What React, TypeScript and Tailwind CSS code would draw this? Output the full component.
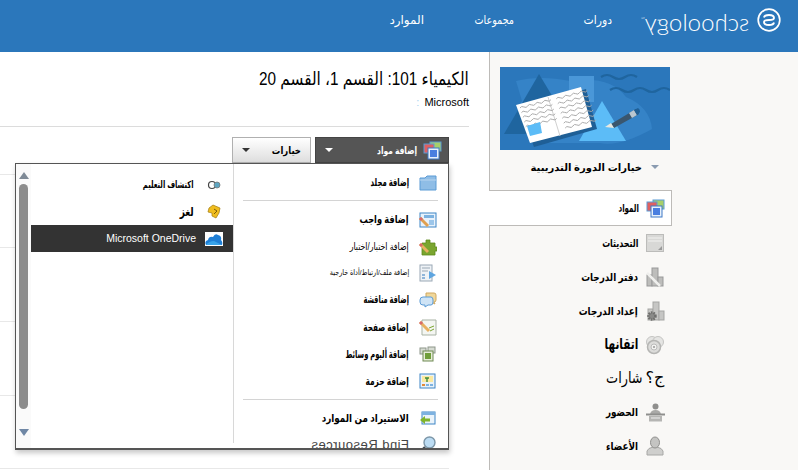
import React from "react";

const Folder = () => (
  <svg width="18" height="16" viewBox="0 0 18 16"><path d="M1 3 L1 15 L17 15 L17 1 L8 1 L6 3 Z" fill="#8fbde6" stroke="#5b9bd5" /><path d="M1 5 H17" stroke="#b9d6ef" /></svg>
);
const Assign = () => (
  <svg width="18" height="16" viewBox="0 0 18 16"><rect x="1" y="1" width="16" height="14" fill="#e8f2fb" stroke="#3f86c6" /><rect x="5" y="3" width="10" height="3" fill="#7db2e0" /><rect x="10" y="8" width="5" height="5" fill="#9cc6ea" /><path d="M1 6 L9 14" stroke="#e0a050" strokeWidth="3" /><path d="M1 6 L3 8" stroke="#d86a6a" strokeWidth="3" /></svg>
);
const Quiz = () => (
  <svg width="18" height="18" viewBox="0 0 18 18"><path d="M3 5 H7 V2 H11 V5 H16 V9 H18 V13 H16 V17 H3 Z" fill="#7aa52f" stroke="#5d8a1c" strokeWidth=".8" /><path d="M1 6 L9 14" stroke="#e8b060" strokeWidth="3" /><path d="M1 6 L3 8" stroke="#d86a6a" strokeWidth="3" /></svg>
);
const FileLink = () => (
  <svg width="18" height="18" viewBox="0 0 18 18"><rect x="1" y="1" width="12" height="16" fill="#eef2f6" stroke="#9aa8b5" /><path d="M3 4 H11 M3 7 H9" stroke="#9aa8b5" /><rect x="3" y="10" width="3" height="2" fill="#8fb5da" /><rect x="3" y="13" width="3" height="2" fill="#8fb5da" /><path d="M10 7 L17 11 L10 15 Z" fill="#5ea5e0" /></svg>
);
const Discuss = () => (
  <svg width="18" height="16" viewBox="0 0 18 16"><path d="M7 1 H15 Q17 1 17 3 V8 Q17 10 15 10 L16 12 L12 10 H7 Z" fill="#f0d79a" stroke="#d0a860" /><path d="M4 5 H12 Q14 5 14 8 V10 Q14 13 12 13 H9 L6 15 V13 H4 Q1 13 1 10 V8 Q1 5 4 5 Z" fill="#cfe4f6" stroke="#5b9bd5" /></svg>
);
const Page = () => (
  <svg width="18" height="17" viewBox="0 0 18 17"><path d="M3 1 H17 V16 H3 Z" fill="#f4f6f2" stroke="#a9b3a5" /><path d="M10 9 L15 7 M11 12 L15 10" stroke="#7aa52f" /><path d="M1 3 L10 12" stroke="#e8b060" strokeWidth="3" /><path d="M1 3 L3 5" stroke="#d86a6a" strokeWidth="3" /></svg>
);
const Album = () => (
  <svg width="17" height="17" viewBox="0 0 17 17"><rect x="9" y="1" width="7" height="6" fill="#d7dcd3" stroke="#8d968a" /><rect x="1" y="2" width="6" height="6" fill="#d7dcd3" stroke="#8d968a" /><rect x="4" y="5" width="10" height="10" fill="#e6ecd8" stroke="#6f8a55" /><rect x="6" y="7" width="6" height="6" fill="#6f9e3a" /></svg>
);
const Pkg = () => (
  <svg width="17" height="16" viewBox="0 0 17 16"><rect x="1" y="1" width="15" height="14" fill="#e9f2f8" stroke="#3f86c6" /><rect x="3" y="3" width="11" height="6" fill="#fbe9a0" /><path d="M8 9 V5 M6 5 H10" stroke="#3f8a3a" strokeWidth="1.4" /><rect x="3" y="11" width="3" height="2" fill="#e08a3a" /><rect x="7" y="11" width="3" height="2" fill="#7db2e0" /><rect x="11" y="11" width="3" height="2" fill="#7db2e0" /></svg>
);
const ImportIc = () => (
  <svg width="16" height="14" viewBox="0 0 16 14"><rect x="2" y="1" width="13" height="12" fill="#eaf3fa" stroke="#3f86c6" /><rect x="2" y="1" width="13" height="3" fill="#7db2e0" /><path d="M0 9 L5 5 V7.500 H10 V10.500 H5 V13 Z" fill="#7fb42c" /></svg>
);
const Magnifier = () => (
  <svg width="17" height="17" viewBox="0 0 17 17"><circle cx="10.500" cy="6.500" r="5.500" fill="#bcdcf3" stroke="#7c96a8" strokeWidth="1.400" /><path d="M6 11 L1 16" stroke="#3d4a55" strokeWidth="2.400" /></svg>
);
const Learn = () => (
  <svg width="14" height="10" viewBox="0 0 14 10"><circle cx="5" cy="5" r="3.500" fill="none" stroke="#444" strokeWidth="1.200" /><circle cx="10" cy="5" r="3" fill="#5ea5c0" stroke="#777" strokeWidth=".8" /></svg>
);
const Puzzle = () => (
  <svg width="14" height="16" viewBox="0 0 14 16"><path d="M6 1 L13 4 L12 9 L9 14 L5 12 L5 9 L1 8 L2 4 Z" fill="#f0bd1e" stroke="#a07a10" strokeWidth=".7" /><path d="M7 5 L10 7 L7 10" stroke="#7a5c08" fill="none" /></svg>
);
const Cloud = () => (
  <svg width="18" height="14" viewBox="0 0 18 14" className="bg-white"><path d="M1 13 Q-1 9 3 8 Q4 4 8 5 Q10 1 13 3 Q17 4 16 8 Q18 10 17 13 Z" fill="#1f7fd6" /><path d="M1 13 Q4 9 9 9 L17 13 Z" fill="#38a3ea" /></svg>
);
const Materials = () => (
  <svg width="19" height="19" viewBox="0 0 19 19"><rect x="7" y="1" width="11" height="9" fill="#a8cf6a" stroke="#5b9bd5" /><rect x="1" y="3" width="10" height="9" fill="#e06060" stroke="#5b9bd5" /><rect x="5" y="7" width="11" height="11" fill="#e8f1fb" stroke="#3f78c6" /><rect x="7" y="9" width="7" height="7" fill="#4a7fe0" /></svg>
);
const Updates = () => (
  <svg width="18" height="18" viewBox="0 0 18 18"><rect x="0.500" y="0.500" width="17" height="17" fill="#d8d8d6" stroke="#bcbcba" /><path d="M2 4 H16 M2 7 H16" stroke="#f2f2f0" /><path d="M12 16 L16 12 V16 Z" fill="#999" /></svg>
);
const Gradebook = () => (
  <svg width="18" height="20" viewBox="0 0 18 20"><rect x="1" y="8" width="5" height="11" fill="#bdbdbb" stroke="#999" /><rect x="6" y="1" width="6" height="18" fill="#bdbdbb" stroke="#999" /><rect x="12" y="10" width="5" height="9" fill="#bdbdbb" stroke="#999" /><path d="M1 6 L14 19" stroke="#efefed" strokeWidth="2.500" /></svg>
);
const GradeSetup = () => (
  <svg width="19" height="21" viewBox="0 0 19 21"><rect x="2" y="8" width="5" height="11" fill="#c6c6c4" stroke="#a5a5a3" /><rect x="7" y="1" width="6" height="18" fill="#c6c6c4" stroke="#a5a5a3" /><rect x="13" y="10" width="5" height="9" fill="#c6c6c4" stroke="#a5a5a3" /><circle cx="6" cy="15" r="3.500" fill="#8a8a88" stroke="#6f6f6d" strokeWidth="2.500" strokeDasharray="1.500 1" /></svg>
);
const Mastery = () => (
  <svg width="20" height="20" viewBox="0 0 20 20"><circle cx="7" cy="7" r="5.500" fill="#e5e5e3" stroke="#c4c4c2" /><circle cx="13" cy="7" r="5.500" fill="#e5e5e3" stroke="#c4c4c2" /><circle cx="9" cy="12" r="6.500" fill="#dcdcda" stroke="#b5b5b3" strokeWidth="1.500" /><circle cx="9" cy="12" r="3" fill="#f2f2f0" stroke="#bbb" /><circle cx="9" cy="12" r="1" fill="#999" /></svg>
);
const Attendance = () => (
  <svg width="19" height="19" viewBox="0 0 19 19"><circle cx="9.500" cy="3.500" r="3" fill="#8f8f8d" /><path d="M4 11 Q5 7 9.500 7 Q14 7 15 11 Z" fill="#a9a9a7" /><rect x="0" y="10.500" width="19" height="2" fill="#8f8f8d" /><rect x="3" y="13" width="13" height="5.500" fill="#b5b5b3" /><path d="M5 15 H14" stroke="#eee" /></svg>
);
const Member = () => (
  <svg width="18" height="20" viewBox="0 0 18 20"><path d="M1 19 V15 Q2 12 7 11 H11 Q16 12 17 15 V19 Z" fill="#cfcfcd" stroke="#a8a8a6" /><ellipse cx="9" cy="6.500" rx="4.500" ry="5.500" fill="#c4c4c2" stroke="#8f8f8d" /></svg>
);

function Illustration() {
  const wave = (x: number, y: number, w: number) => {
    let d = `M${x} ${y}`;
    for (let i = 0; i < w; i += 8) d += ` q2 -2 4 0 t4 0`;
    return d;
  };
  const left = [41, 46, 51, 56, 61];
  const right = [27, 32, 37, 42, 47, 52, 57];
  return (
    <svg width="170" height="83" viewBox="0 0 170 83" className="block">
      <rect width="170" height="83" fill="#2b77bb" />
      <path d="M16 14 Q40 8 70 14 Q110 8 126 30 Q150 40 152 62 Q120 80 100 76 L40 76 Q10 50 22 34 Z" fill="#3583c7" />
      <path d="M39 7 L4 67 L75 67 Z" fill="#1f659f" />
      <rect x="69" y="9" width="25" height="26" fill="#4a97d8" />
      <path d="M102 34 L79 74 L126 74 Z" fill="#5cbcf7" />
      <path d="M101 10 q6 -4 12 0 t12 0 t12 0" stroke="#1f659f" strokeWidth="2.200" fill="none" />
      <path d="M110 23 q6 -4 12 0 t12 0 t12 0 t12 0 t12 0" stroke="#1f659f" strokeWidth="2.200" fill="none" />
      <path d="M20 42 L86 22 L97 62 L34 80 Z" fill="#1f5f96" />
      <path d="M16 38 L81 20 L92 60 L30 76 Z" fill="#ffffff" />
      <path d="M48 30 L60 69" stroke="#d0d0d0" />
      {left.map((y, i) => (
        <path key={i} d={wave(20 + i * 1.500, y - i * 0.200, 26)} stroke="#aaa" strokeWidth=".9" fill="none" transform={`rotate(-15 ${20 + i} ${y})`} />
      ))}
      {right.map((y, i) => (
        <path key={i} d={wave(55 + i * 1.500, y + 5, 26)} stroke="#aaa" strokeWidth=".9" fill="none" transform={`rotate(-15 ${55 + i} ${y})`} />
      ))}
      <path d="M27 59 L40 55 L42 66 L30 69 Z" fill="#5cbcf7" />
      <path d="M111 57 L136 42 L139 47 L114 61 Z" fill="#3a566e" />
      <path d="M129 46 L134 43 L137 48 L132 51 Z" fill="#b9c6d0" />
      <path d="M134 43 L138 41 Q140 42 140 45 L137 48 Z" fill="#1f5f96" />
      <path d="M105 60 L111 56 L114 61 Z" fill="#e8e8e0" />
    </svg>
  );
}

const Tri = ({ c }: { c: string }) => <span className={`inline-block w-0 h-0 border-x-[4px] border-x-transparent border-t-[4px] ${c}`} />;

const squeeze = "inline-block origin-right whitespace-nowrap";

const items: [React.ReactNode, string, string, string][] = [
  [<Assign />, "إضافة واجب", "text-[11px] font-bold h-[27px]", "scale-x-[0.75]"],
  [<Quiz />, "إضافة اختبار/اختبار", "text-[10px] h-[27px]", "scale-x-[0.78]"],
  [<FileLink />, "إضافة ملف/ارتباط/أداة خارجية", "text-[8px] h-[26px]", "scale-x-[0.8]"],
  [<Discuss />, "إضافة مناقشة", "text-[11px] font-bold h-[27px]", "scale-x-[0.6]"],
  [<Page />, "إضافة صفحة", "text-[11px] font-bold h-[28px]", "scale-x-[0.66]"],
  [<Album />, "إضافة ألبوم وسائط", "text-[11px] font-bold h-[26px]", "scale-x-[0.61]"],
  [<Pkg />, "إضافة حزمة", "text-[11px] font-bold h-[28px]", "scale-x-[0.68]"],
];

const nav: [React.ReactNode, string, string, string][] = [
  [<Updates />, "التحديثات", "text-[11px] font-bold h-[34px]", "scale-x-[0.72]"],
  [<Gradebook />, "دفتر الدرجات", "text-[11px] font-bold h-[34px]", "scale-x-[0.8]"],
  [<GradeSetup />, "إعداد الدرجات", "text-[11px] font-bold h-[34px]", "scale-x-[0.8]"],
  [<Mastery />, "اتقانها", "text-[15px] font-bold h-[33px]", "scale-x-[0.7]"],
  [<span className="text-[16px] leading-none">ج؟</span>, "شارات", "text-[16px] h-[34px]", "scale-x-[0.8] -mr-[5px]"],
  [<Attendance />, "الحضور", "text-[11px] font-bold h-[34px]", "scale-x-[0.8]"],
  [<Member />, "الأعضاء", "text-[11px] font-bold h-[34px]", "scale-x-[0.8]"],
];

export default function App() {
  return (
    <div dir="rtl" className="w-[798px] h-[470px] overflow-hidden bg-white text-black font-['Liberation_Sans','DejaVu_Sans',sans-serif]">
      <header className="h-[52px] bg-[#2b77bb] flex items-start pt-[8px] pr-[17px] text-white">
        <div className="flex items-center gap-[8px] w-[138px] h-[24px] shrink-0">
          <svg width="24" height="24" viewBox="0 0 24 24" className="shrink-0">
            <circle cx="12" cy="12" r="10.800" fill="none" stroke="#fff" strokeWidth="1.700" />
            <path d="M7 9.500 Q7.500 7 12 7 Q17 7 17 10 Q17 12 12 12 Q7 12 7 14 Q7 17 12 17 Q16.500 17 17 14.500" fill="none" stroke="#fff" strokeWidth="1.900" />
          </svg>
          <span dir="ltr" className="-scale-x-100 font-['Lato',sans-serif] font-light text-[24px] leading-[24px] whitespace-nowrap">schoology<span className="text-[5px] align-[10px]">™</span></span>
        </div>
        <nav className="flex text-[12px] leading-[24px] mr-[31px]">
          <span className={`w-[29px] ${squeeze} scale-x-[0.9]`}>دورات</span>
          <span className={`w-[41px] mr-[69px] ${squeeze} scale-x-[0.8]`}>مجموعات</span>
          <span className={`w-[30px] mr-[49px] ${squeeze}`}>الموارد</span>
        </nav>
      </header>

      <div className="flex h-[418px]">
        <aside className="w-[309px] shrink-0 bg-[#f9f8f6] border-l border-[#bdbbb8] flex flex-col">
          <div className="w-[170px] mr-[128px] mt-[15px]">
            <Illustration />
          </div>
          <div className="w-[180px] mr-auto h-[40px] flex items-center pb-[6px] pr-[11px] text-[10px] font-bold gap-[9px]">
            <Tri c="border-t-[#8a9bb0]" />
            <span>خيارات الدورة التدريبية</span>
          </div>
          <div className="w-[183px] mr-auto -ml-px h-[36px] bg-white border-y border-r border-[#bdbbb8] flex items-center pr-[6px] gap-[7px] text-[11px] font-bold">
            <span className="w-[19px] flex justify-center shrink-0"><Materials /></span>
            <span className={`w-[20px] ${squeeze} scale-x-[0.65]`}>المواد</span>
          </div>
          <ul className="w-[180px] mr-auto">
            {nav.map(([ic, t, c, s], i) => (
              <li key={i} className={`flex items-center pr-[5px] gap-[7px] ${c}`}>
                <span className="w-[20px] flex justify-center shrink-0">{ic}</span>
                <span className={`${squeeze} ${s}`}>{t}</span>
              </li>
            ))}
          </ul>
        </aside>

        <main className="relative flex-1 min-w-0">
          <div className="mr-[20px] h-[75px] border-b border-[#dcdcdc] pt-[15px]">
            <h1 className={`text-[18px] leading-[24px] font-normal ${squeeze} scale-x-[0.85]`}>الكيمياء 101: القسم 1، القسم 20</h1>
            <div className="flex text-[11px] leading-[14px] mt-[3px] gap-[5px]">
              <span>Microsoft</span>
              <span className="text-[#a9d4f0]">:</span>
            </div>
          </div>

          <div className="flex mr-[40px] mt-[10px] gap-[4px] h-[26px]">
            <div className="w-[134px] bg-[#555555] border border-[#444] text-white flex items-center pr-[6px] gap-[6px] text-[10px] font-bold">
              <Materials />
              <span className={`flex-1 ${squeeze} scale-x-[0.75]`}>إضافة مواد</span>
              <span className="ml-[9px] flex"><Tri c="border-t-white" /></span>
            </div>
            <div className="w-[79px] bg-gradient-to-b from-white to-[#dedede] border border-[#b0b0b0] flex items-center pr-[9px] text-[10px] font-bold">
              <span className={`flex-1 ${squeeze} scale-x-[0.85]`}>خيارات</span>
              <span className="ml-[9px] flex"><Tri c="border-t-[#333]" /></span>
            </div>
          </div>

          <div className="w-[449px] mr-[40px] mt-[11px] border-t border-[#e8e8e8]">
            <div className="h-[73px] border-b border-[#e8e8e8]" />
            <div className="h-[74px] border-b border-[#e8e8e8]" />
            <div className="h-[74px] border-b border-[#e8e8e8]" />
            <div className="h-[73px] border-b border-[#e8e8e8]" />
          </div>

          <div dir="ltr" className="absolute left-[15px] top-[111px] w-[434px] h-[287px] bg-white border border-b-2 border-[#555] shadow-[1px_3px_5px_rgba(0,0,0,0.22)] flex overflow-hidden">
            <div className="w-[15px] shrink-0 bg-[#fafafa] flex flex-col items-center pt-[8px]">
              <div className="w-0 h-0 border-x-[5px] border-x-transparent border-b-[7px] border-b-[#7f8a96]" />
              <div className="w-[9px] h-[225px] rounded-full bg-[#8c8c8c] mt-[5px]" />
              <div className="w-0 h-0 border-x-[5px] border-x-transparent border-t-[7px] border-t-[#6f87a5] mt-[20px]" />
            </div>

            <div dir="rtl" className="w-[202px] shrink-0 pt-[7px]">
              <div className="h-[27px] flex items-center pr-[10px] gap-[11px] text-[10px] font-bold">
                <span className="w-[18px] flex justify-center shrink-0"><Learn /></span>
                <span className={`${squeeze} scale-x-[0.68]`}>اكتشاف التعليم</span>
              </div>
              <div className="h-[27px] flex items-center pr-[10px] gap-[11px] text-[12px] font-bold">
                <span className="w-[18px] flex justify-center shrink-0"><Puzzle /></span>
                <span className={`${squeeze} scale-x-[0.75]`}>لغز</span>
              </div>
              <div className="h-[27px] bg-[#333333] text-white flex items-center pr-[10px] gap-[9px] text-[10.5px]">
                <Cloud />
                <span dir="ltr">Microsoft OneDrive</span>
              </div>
            </div>

            <div dir="rtl" className="relative flex-1 pt-[5px] overflow-hidden">
              <div className="absolute left-0 top-0 bottom-[5px] w-px bg-[#d8d8d8]" />
              <div className="h-[27px] flex items-center pr-[11px] gap-[9px] text-[11px] font-bold">
                <span className="w-[19px] flex justify-center shrink-0"><Folder /></span>
                <span className={`${squeeze} scale-x-[0.63]`}>إضافة مجلد</span>
              </div>
              <div className="h-px bg-[#d4d4d4] mx-[10px] mt-[4px] mb-[5px]" />
              {items.map(([ic, t, c, s], i) => (
                <div key={i} className={`flex items-center pr-[11px] gap-[9px] ${c}`}>
                  <span className="w-[19px] flex justify-center shrink-0">{ic}</span>
                  <span className={`${squeeze} ${s}`}>{t}</span>
                </div>
              ))}
              <div className="h-px bg-[#d4d4d4] mx-[10px] mt-[4px] mb-[5px]" />
              <div className="h-[26px] flex items-center pr-[11px] gap-[9px] text-[11px]">
                <span className="w-[19px] flex justify-center shrink-0"><ImportIc /></span>
                <span className={`${squeeze} scale-x-[0.8] font-bold`}>الاستيراد من الموارد</span>
              </div>
              <div className="h-[27px] flex items-center pr-[11px] gap-[9px] text-[13px] text-[#444]">
                <span className="w-[19px] flex justify-center shrink-0"><Magnifier /></span>
                <span dir="ltr" className="-scale-x-100 tracking-[0.5px] whitespace-nowrap">Find Resources</span>
              </div>
            </div>
          </div>
        </main>
      </div>
    </div>
  );
}
